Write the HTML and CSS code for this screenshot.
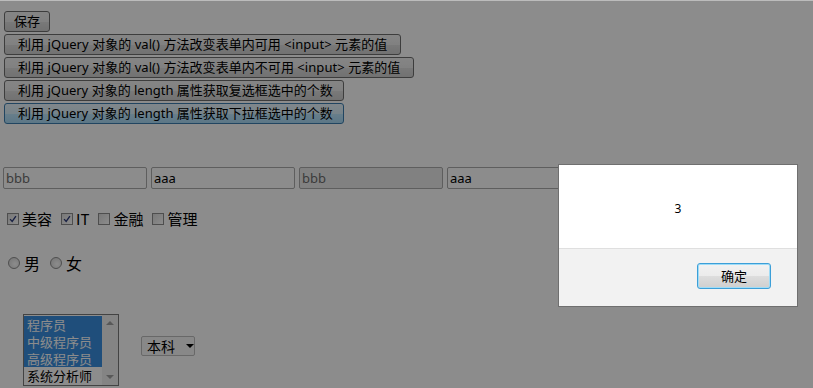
FILE: index.html
```html
<!DOCTYPE html>
<html>
<head>
<meta charset="utf-8">
<link rel="stylesheet" href="styles.css">
</head>
<body>
<div class="topline"></div>
<div class="page">
  <div class="buttons">
    <button class="btn btn-short">保存</button>
    <button class="btn btn-wide">利用 jQuery 对象的 val() 方法改变表单内可用 &lt;input&gt; 元素的值</button>
    <button class="btn btn-wide">利用 jQuery 对象的 val() 方法改变表单内不可用 &lt;input&gt; 元素的值</button>
    <button class="btn">利用 jQuery 对象的 length 属性获取复选框选中的个数</button>
    <button class="btn btn-focus">利用 jQuery 对象的 length 属性获取下拉框选中的个数</button>
  </div>

  <div class="inputs">
    <div class="field muted">bbb</div>
    <div class="field">aaa</div>
    <div class="field disabled muted">bbb</div>
    <div class="field">aaa</div>
  </div>

  <div class="checks">
    <label class="opt"><span class="box"><svg viewBox="0 0 12 12" width="12" height="12"><path d="M2.5 6.2 L5 9 L9.5 2.5" fill="none" stroke="#2c3a7a" stroke-width="1.6"/></svg></span>美容</label>
    <label class="opt"><span class="box"><svg viewBox="0 0 12 12" width="12" height="12"><path d="M2.5 6.2 L5 9 L9.5 2.5" fill="none" stroke="#2c3a7a" stroke-width="1.6"/></svg></span>IT</label>
    <label class="opt"><span class="box"></span>金融</label>
    <label class="opt"><span class="box"></span>管理</label>
  </div>

  <div class="radios">
    <label class="opt"><span class="radio"></span>男</label>
    <label class="opt"><span class="radio"></span>女</label>
  </div>

  <div class="selects">
    <div class="listbox">
      <div class="items">
        <div class="item sel">程序员</div>
        <div class="item sel">中级程序员</div>
        <div class="item sel">高级程序员</div>
        <div class="item">系统分析师</div>
      </div>
      <div class="scroll">
        <span class="arrow up"></span>
        <span class="arrow down"></span>
      </div>
    </div>
    <div class="dropdown">本科<span class="caret"></span></div>
  </div>
</div>

<div class="overlay"></div>

<div class="dialog">
  <div class="dialog-body">3</div>
  <div class="dialog-foot">
    <button class="ok">确定</button>
  </div>
</div>
</body>
</html>
```
FILE: styles.css
```css
html, body {
  margin: 0;
  padding: 0;
  background: #ffffff;
}
body {
  font-family: "Noto Sans", "Noto Sans CJK SC", sans-serif;
  color: #000;
  width: 813px;
  height: 388px;
  overflow: hidden;
}
.topline {
  height: 1px;
  background: #bcbcbc;
}
.page {
  padding: 10px 0 0 4px;
}
.buttons {
  display: flex;
  flex-direction: column;
  align-items: flex-start;
  gap: 2px;
}
.btn {
  font-family: "Noto Sans", "Noto Sans CJK SC", sans-serif;
  font-size: 13px;
  line-height: 15px;
  height: 21px;
  padding: 0 10px 0 13px;
  border: 1px solid #707070;
  border-radius: 3px;
  background: linear-gradient(#f2f2f2, #ebebeb 50%, #dddddd 51%, #cfcfcf);
  color: #000;
  margin: 0;
  white-space: nowrap;
}
.btn-short {
  padding: 0 9px;
}
.btn-wide {
  padding-right: 13px;
  letter-spacing: 0.05px;
}
.btn-focus {
  border-color: #3c7fb1;
  background: linear-gradient(#eaf6fd, #d9f0fc 50%, #bee6fd 51%, #a7d9f5);
}
.inputs {
  display: flex;
  gap: 4px;
  margin: 43px 0 0 -1px;
  width: 900px;
}
.field {
  box-sizing: border-box;
  width: 144px;
  height: 22px;
  border: 1px solid #ababab;
  border-radius: 2px;
  background: #fff;
  font-size: 13px;
  line-height: 20px;
  padding-left: 2px;
  color: #000;
  font-family: "Noto Sans", "Noto Sans CJK SC", sans-serif;
}
.field.muted { color: #6d6d6d; }
.field.disabled { background: #ececec; }
.checks {
  display: flex;
  gap: 9px;
  margin: 18px 0 0 3px;
  height: 24px;
  align-items: center;
}
.opt {
  display: flex;
  align-items: center;
  font-size: 15px;
  line-height: 20px;
  font-family: "Noto Sans CJK SC", sans-serif;
}
.box {
  box-sizing: border-box;
  width: 12px;
  height: 12px;
  border: 1px solid #8f8f8f;
  background: linear-gradient(135deg, #dcdcdc, #ffffff);
  margin-right: 3px;
  display: flex;
  align-items: center;
  justify-content: center;
}
.box svg { display: block; width: 10px; height: 10px; }
.radios {
  display: flex;
  gap: 10px;
  margin: 20px 0 0 4px;
  height: 24px;
  align-items: center;
}
.radios .opt { font-size: 16px; }
.radio {
  box-sizing: border-box;
  width: 12px;
  height: 12px;
  border: 1px solid #8f8f8f;
  border-radius: 50%;
  background: radial-gradient(circle at 60% 60%, #ffffff, #d4d4d4);
  margin-right: 4px;
}
.selects {
  display: flex;
  align-items: flex-start;
  margin: 39px 0 0 19px;
}
.listbox {
  box-sizing: border-box;
  width: 96px;
  height: 72px;
  border: 1px solid #7a7a7a;
  background: #fff;
  display: flex;
  font-family: "Noto Sans CJK SC", sans-serif;
}
.items {
  flex: 1;
  padding-top: 1px;
}
.item {
  font-size: 13px;
  line-height: 17px;
  height: 17px;
  padding-left: 3px;
  color: #000;
  white-space: nowrap;
}
.item.sel {
  background: #3a8fe0;
  color: #fff;
}
.scroll {
  width: 16px;
  background: #f0f0f0;
  display: flex;
  flex-direction: column;
  justify-content: space-between;
  align-items: center;
  padding: 6px 0;
}
.arrow {
  width: 0;
  height: 0;
  border-left: 4px solid transparent;
  border-right: 4px solid transparent;
}
.arrow.up { border-bottom: 4px solid #a0a0a0; }
.arrow.down { border-top: 4px solid #a0a0a0; }
.dropdown {
  box-sizing: border-box;
  width: 54px;
  height: 20px;
  margin: 22px 0 0 22px;
  border: 1px solid #bdbdbd;
  border-radius: 2px;
  background: #f7f7f7;
  font-family: "Noto Sans CJK SC", sans-serif;
  font-size: 14px;
  line-height: 18px;
  padding-left: 5px;
  display: flex;
  align-items: center;
}
.caret {
  margin-left: 11px;
  width: 0;
  height: 0;
  border-left: 4px solid transparent;
  border-right: 4px solid transparent;
  border-top: 4px solid #000;
}
.overlay {
  position: fixed;
  left: 0;
  top: 1px;
  right: 0;
  bottom: 0;
  background: rgba(0, 0, 0, 0.45);
}
.dialog {
  position: fixed;
  left: 558px;
  top: 164px;
  width: 240px;
  height: 143px;
  box-sizing: border-box;
  border: 1px solid #6f6f6f;
  background: #f2f2f2;
  display: flex;
  flex-direction: column;
  font-family: "Noto Sans", "Noto Sans CJK SC", sans-serif;
}
.dialog-body {
  height: 84px;
  background: #fff;
  border-bottom: 1px solid #dfdfdf;
  text-align: center;
  font-size: 12px;
  line-height: 16px;
  padding-top: 36px;
  box-sizing: border-box;
}
.dialog-foot {
  flex: 1;
  display: flex;
  justify-content: flex-end;
  align-items: flex-start;
  padding: 14px 26px 0 0;
}
.ok {
  width: 74px;
  height: 26px;
  margin: 0;
  border: 1px solid #3c9fd8;
  border-radius: 3px;
  box-shadow: inset 0 0 0 1px #9fdcf7;
  background: linear-gradient(#f2f2f2, #ebebeb 50%, #dddddd 51%, #cfcfcf);
  font-family: "Noto Sans CJK SC", sans-serif;
  font-size: 13px;
  line-height: 16px;
  color: #000;
}
```
